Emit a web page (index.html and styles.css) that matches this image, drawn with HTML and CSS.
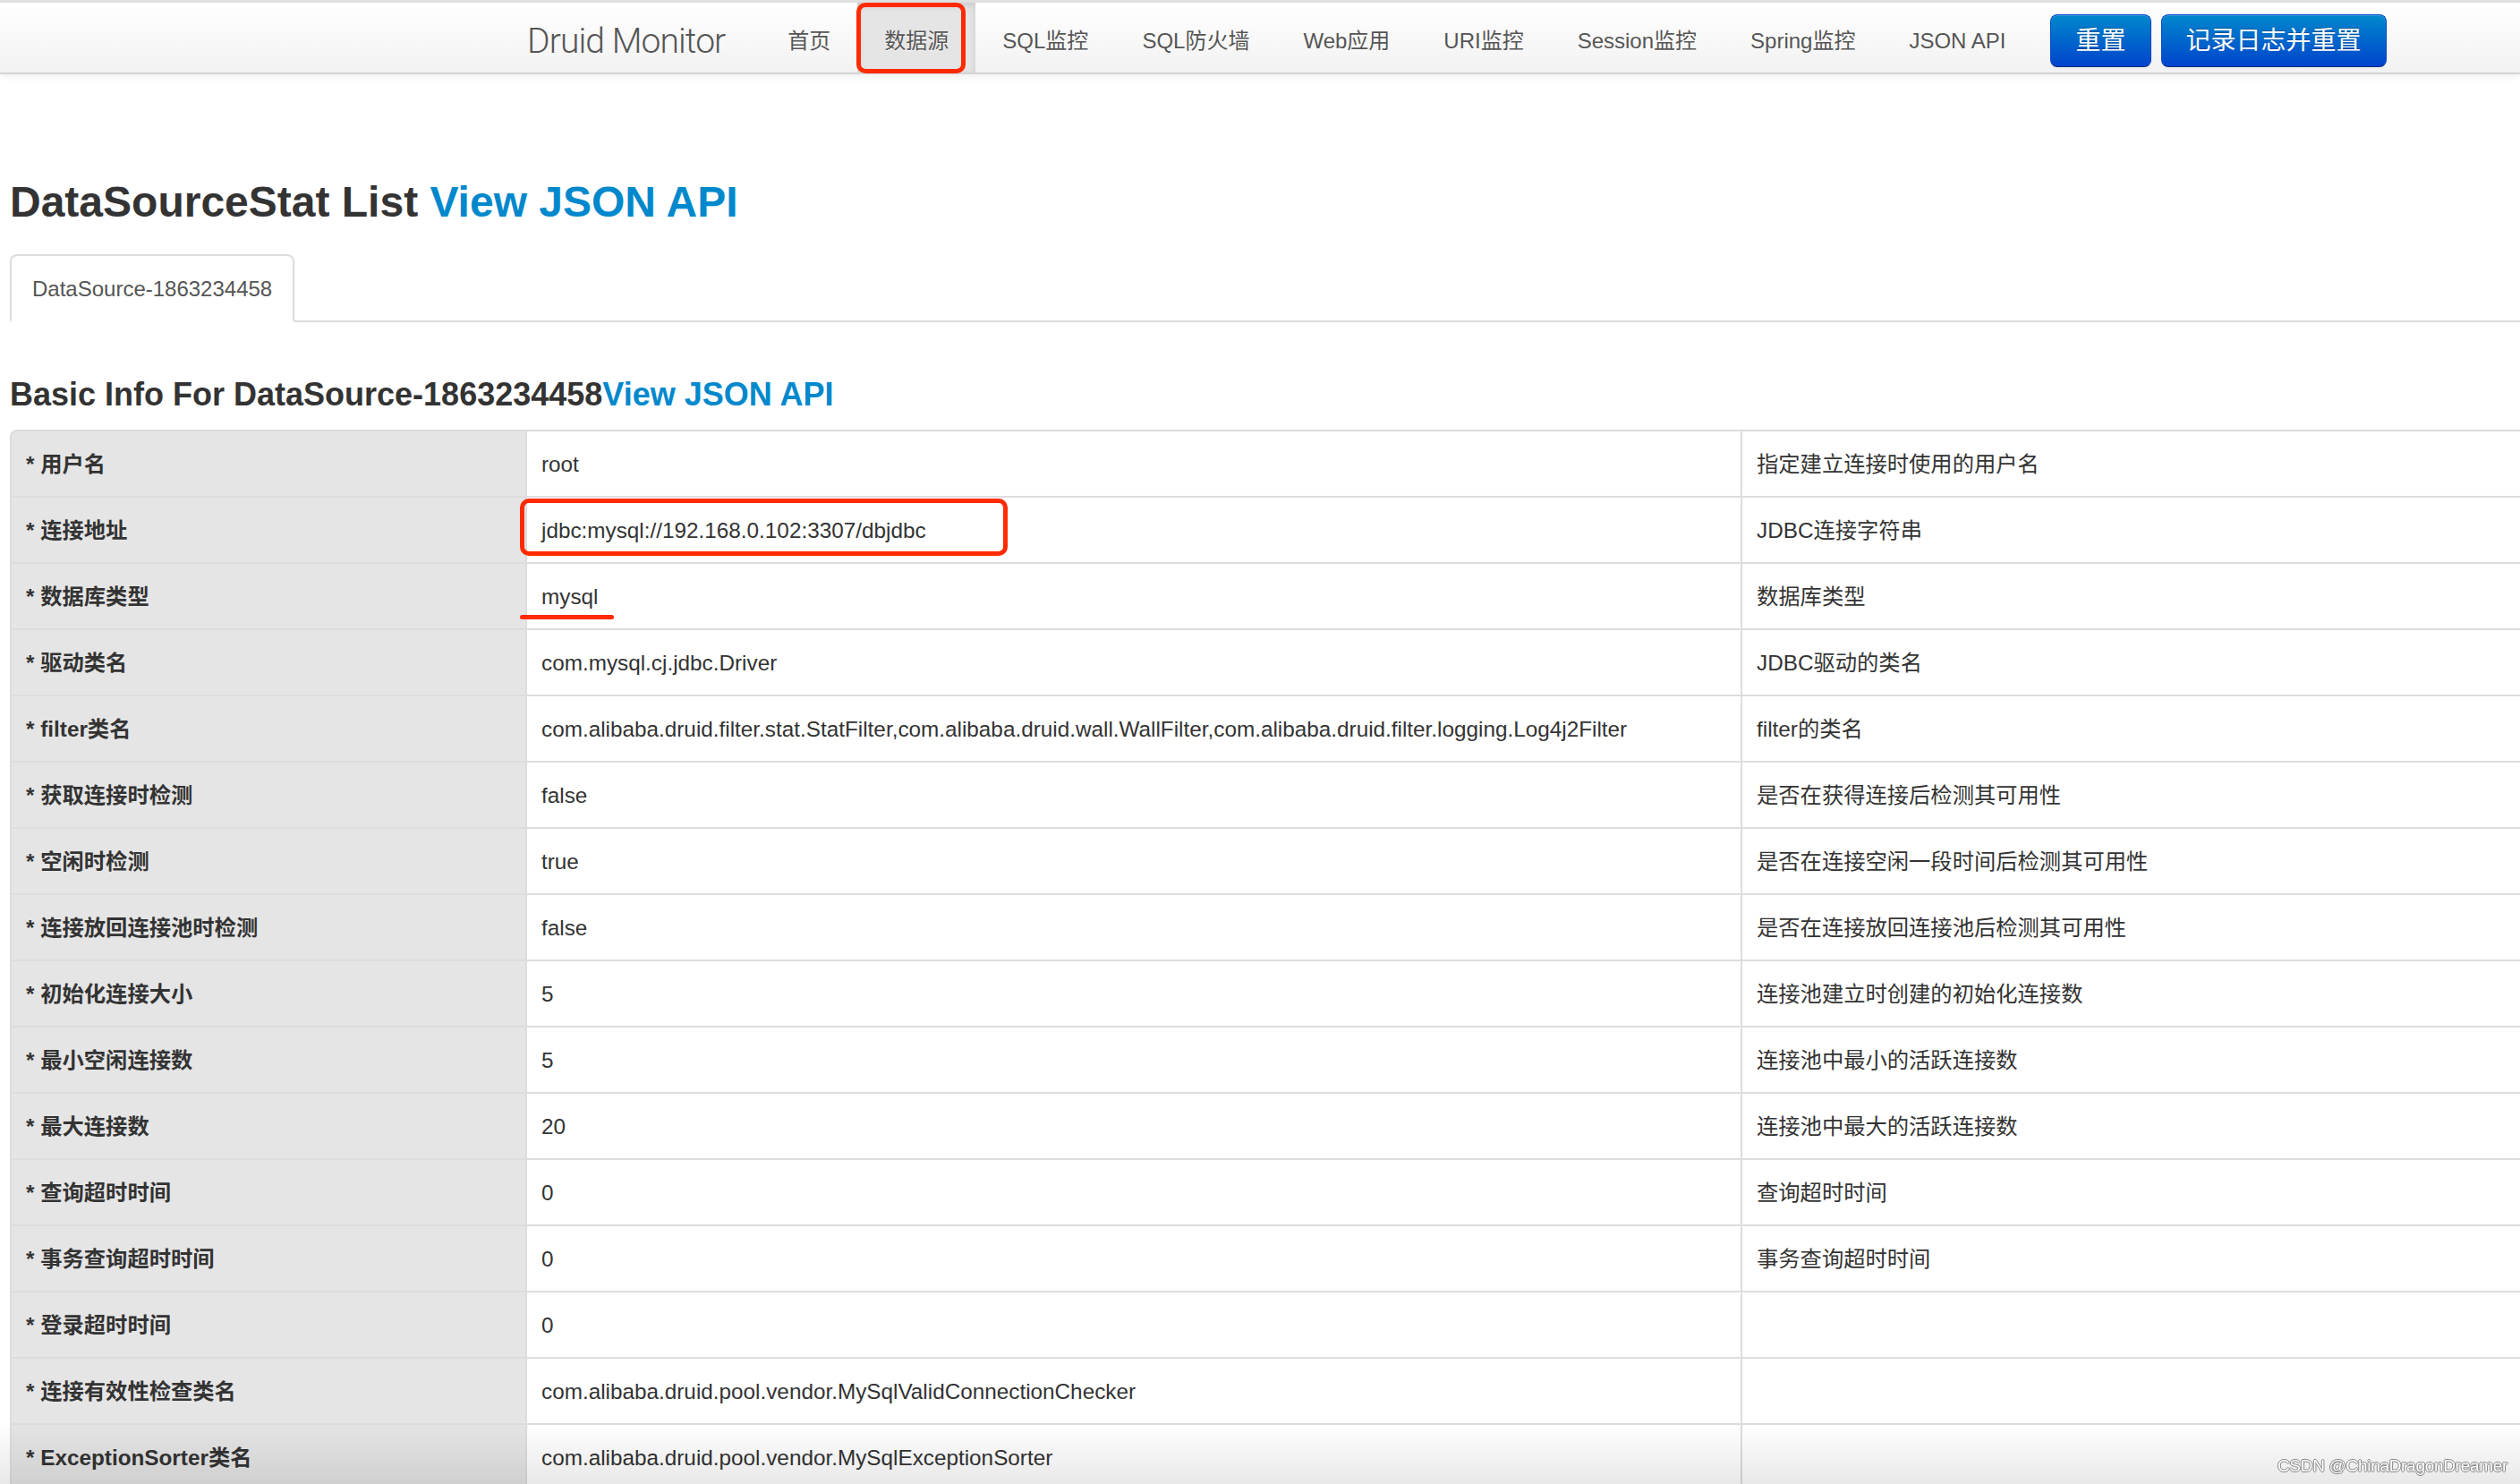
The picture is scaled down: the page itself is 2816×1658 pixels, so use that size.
FILE: index.html
```html
<!DOCTYPE html>
<html lang="zh-CN">
<head>
<meta charset="utf-8">
<title>Druid Monitor</title>
<link rel="stylesheet" href="styles.css">
</head>
<body>
<div class="topline"></div>
<header class="navbar">
  <span class="brand">Druid Monitor</span>
  <ul class="nav">
    <li><a href="#">首页</a></li>
    <li class="active"><a href="#">数据源</a><span class="mark-box nav-mark"></span></li>
    <li><a href="#">SQL监控</a></li>
    <li><a href="#">SQL防火墙</a></li>
    <li><a href="#">Web应用</a></li>
    <li><a href="#">URI监控</a></li>
    <li><a href="#">Session监控</a></li>
    <li><a href="#">Spring监控</a></li>
    <li><a href="#">JSON API</a></li>
  </ul>
  <button class="btn btn-first">重置</button>
  <button class="btn">记录日志并重置</button>
</header>

<main class="content">
  <h1 class="title">DataSourceStat List <a href="#">View JSON API</a></h1>
  <ul class="tabs">
    <li class="tab">DataSource-1863234458</li>
  </ul>
  <h3 class="subtitle">Basic Info For DataSource-1863234458<a href="#">View JSON API</a></h3>
  <table class="info">
    <colgroup>
      <col class="c1"><col class="c2"><col class="c3">
    </colgroup>
    <tbody>
      <tr><td>* 用户名</td><td>root</td><td>指定建立连接时使用的用户名</td></tr>
      <tr><td>* 连接地址</td><td><span class="anno">jdbc:mysql://192.168.0.102:3307/dbjdbc<span class="mark-box url-mark"></span></span></td><td>JDBC连接字符串</td></tr>
      <tr><td>* 数据库类型</td><td><span class="anno">mysql<span class="mark-line"></span></span></td><td>数据库类型</td></tr>
      <tr><td>* 驱动类名</td><td>com.mysql.cj.jdbc.Driver</td><td>JDBC驱动的类名</td></tr>
      <tr><td>* filter类名</td><td>com.alibaba.druid.filter.stat.StatFilter,com.alibaba.druid.wall.WallFilter,com.alibaba.druid.filter.logging.Log4j2Filter</td><td>filter的类名</td></tr>
      <tr><td>* 获取连接时检测</td><td>false</td><td>是否在获得连接后检测其可用性</td></tr>
      <tr><td>* 空闲时检测</td><td>true</td><td>是否在连接空闲一段时间后检测其可用性</td></tr>
      <tr><td>* 连接放回连接池时检测</td><td>false</td><td>是否在连接放回连接池后检测其可用性</td></tr>
      <tr><td>* 初始化连接大小</td><td>5</td><td>连接池建立时创建的初始化连接数</td></tr>
      <tr><td>* 最小空闲连接数</td><td>5</td><td>连接池中最小的活跃连接数</td></tr>
      <tr><td>* 最大连接数</td><td>20</td><td>连接池中最大的活跃连接数</td></tr>
      <tr><td>* 查询超时时间</td><td>0</td><td>查询超时时间</td></tr>
      <tr><td>* 事务查询超时时间</td><td>0</td><td>事务查询超时时间</td></tr>
      <tr><td>* 登录超时时间</td><td>0</td><td></td></tr>
      <tr><td>* 连接有效性检查类名</td><td>com.alibaba.druid.pool.vendor.MySqlValidConnectionChecker</td><td></td></tr>
      <tr><td>* ExceptionSorter类名</td><td>com.alibaba.druid.pool.vendor.MySqlExceptionSorter</td><td></td></tr>
    </tbody>
  </table>
</main>

<div class="fade"></div>
<div class="watermark">CSDN @ChinaDragonDreamer</div>
</body>
</html>
```

FILE: styles.css
```css
html, body {
  margin: 0;
  padding: 0;
}

body {
  font-family: "Liberation Sans", "Noto Sans CJK SC", sans-serif;
  color: #333;
  background: #fff;
  overflow: hidden;
}

.topline {
  height: 3px;
  background: #e3e3e3;
}

.navbar {
  display: flex;
  align-items: stretch;
  height: 78px;
  padding-left: 589px;
  background: linear-gradient(#ffffff, #f2f2f2);
  border-bottom: 2px solid #d4d4d4;
  box-shadow: 0 2px 8px rgba(0, 0, 0, 0.07);
  position: relative;
  z-index: 2;
}

.brand {
  font-family: "Roboto", "Liberation Sans", sans-serif;
  font-weight: 300;
  font-size: 39px;
  padding-top: 8px;
  line-height: 70px;
  color: #555;
  margin-right: 40px;
  letter-spacing: -0.9px;
}

.nav {
  display: flex;
  list-style: none;
  margin: 0;
  padding: 0;
}

.nav li {
  position: relative;
  display: flex;
}

.nav a {
  padding: 8px 30px 0;
  font-size: 24px;
  line-height: 70px;
  color: #555;
  text-decoration: none;
  text-shadow: 0 1px 0 #fff;
}

.nav li.active a {
  background: #e5e5e5;
  box-shadow: inset 0 3px 8px rgba(0, 0, 0, 0.12);
}

.mark-box {
  position: absolute;
  box-sizing: border-box;
  border: 5px solid #ff2a00;
  border-radius: 10px;
  pointer-events: none;
}

.nav-mark {
  left: -1px;
  top: 0;
  width: 122px;
  height: 79px;
}

.btn {
  align-self: flex-start;
  margin-top: 13px;
  margin-left: 11px;
  height: 59px;
  padding: 0 27px;
  font-family: "Liberation Sans", "Noto Sans CJK SC", sans-serif;
  font-size: 28px;
  line-height: 57px;
  color: #fff;
  text-shadow: 0 -1px 0 rgba(0, 0, 0, 0.25);
  background: linear-gradient(#0088cc, #0044cc);
  border: 1px solid #0044cc;
  border-bottom-color: #002a80;
  border-radius: 8px;
  box-shadow: inset 0 1px 0 rgba(255, 255, 255, 0.2), 0 1px 2px rgba(0, 0, 0, 0.05);
}

.btn-first {
  margin-left: 20px;
}

.content {
  padding-left: 11px;
}

.content a {
  color: #0088cc;
  text-decoration: none;
}

.title {
  margin: 114px 0 29px;
  font-size: 48px;
  line-height: 58px;
  font-weight: bold;
  color: #333;
}

.tabs {
  display: flex;
  list-style: none;
  margin: 0;
  padding: 0;
  border-bottom: 2px solid #ddd;
}

.tab {
  margin-bottom: -2px;
  padding: 19px 23px 17px;
  font-size: 24px;
  line-height: 36px;
  color: #555;
  background: #fff;
  border: 2px solid #ddd;
  border-bottom-color: transparent;
  border-radius: 8px 8px 0 0;
}

.subtitle {
  margin: 59px 0 18px;
  font-size: 36px;
  line-height: 43px;
  font-weight: bold;
  color: #333;
}

.info {
  table-layout: fixed;
  width: 2805px;
  border-collapse: separate;
  border-spacing: 0;
  border-radius: 8px 0 0 0;
}

.info col.c1 { width: 576px; }
.info col.c2 { width: 1358px; }
.info col.c3 { width: 871px; }

.info td {
  padding: 19px 16px 17px;
  font-size: 24.3px;
  line-height: 36px;
  color: #333;
  white-space: nowrap;
  overflow: visible;
  border-top: 2px solid #ddd;
  border-left: 2px solid #ddd;
  vertical-align: middle;
}

.info td:first-child {
  background: #e5e5e5;
  font-weight: bold;
}

.info tr:first-child td:first-child {
  border-top-left-radius: 8px;
}

.anno {
  position: relative;
  display: inline-block;
}

.url-mark {
  left: -24px;
  right: -91px;
  top: -18px;
  bottom: -10px;
}

.mark-line {
  position: absolute;
  left: -24px;
  width: 105px;
  top: 38px;
  height: 5px;
  border-radius: 3px;
  background: #ff2a00;
}

.fade {
  position: fixed;
  left: 0;
  right: 0;
  bottom: 0;
  height: 68px;
  background: linear-gradient(rgba(0, 0, 0, 0), rgba(0, 0, 0, 0.09));
  pointer-events: none;
}

.watermark {
  position: fixed;
  right: 14px;
  bottom: 9px;
  font-size: 19px;
  line-height: 22px;
  color: #fff;
  text-shadow: 1px 0 0 #888, -1px 0 0 #888, 0 1px 0 #888, 0 -1px 0 #888;
  letter-spacing: -0.3px;
}
```
